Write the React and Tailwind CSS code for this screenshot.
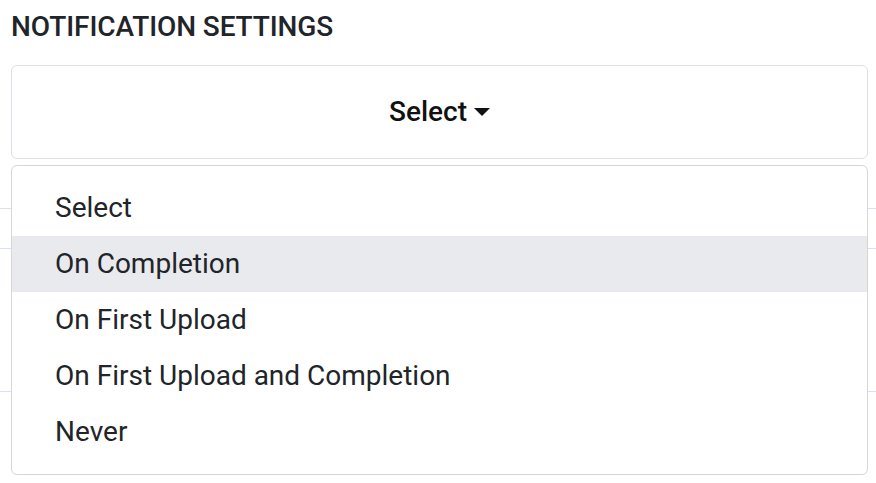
export default function App() {
  const items = [
    "Select",
    "On Completion",
    "On First Upload",
    "On First Upload and Completion",
    "Never",
  ];
  return (
    <div
      className="w-[876px] h-[483px] bg-white overflow-hidden relative"
      style={{ fontFamily: "Roboto, 'Liberation Sans', sans-serif" }}
    >
      <div className="pt-[10px] pl-[11px] text-[28px] leading-[33px] font-medium text-[#212529] tracking-[-0.1px]">
        NOTIFICATION SETTINGS
      </div>
      <div className="relative mt-[22px]">
        <div className="ml-[11px] w-[857px] h-[94px] border border-[#dcdfef] rounded-[6px] flex items-center justify-center text-[28px] font-medium text-[#111]">
          <span>Select</span>
          <span className="ml-[7px] w-0 h-0 border-t-[8px] border-t-[#111] border-x-[8px] border-x-transparent"></span>
        </div>
        <div className="flex flex-col">
          <div className="h-[50px] border-b border-[#dcdeef]"></div>
          <div className="h-[40px] border-b border-[#dcdeef]"></div>
          <div className="h-[143px] border-b border-[#dcdeef]"></div>
        </div>
        <div className="absolute left-[11px] top-[100px] w-[857px] bg-white border border-[#d6d6d6] rounded-[6px] py-[14px]">
          {items.map((t, i) => (
            <div
              key={t}
              className={
                "h-[56px] flex items-center pl-[43px] text-[28px] text-[#212529] " +
                (i === 1 ? "bg-[#e9eaee]" : "")
              }
            >
              {t}
            </div>
          ))}
        </div>
      </div>
    </div>
  );
}
